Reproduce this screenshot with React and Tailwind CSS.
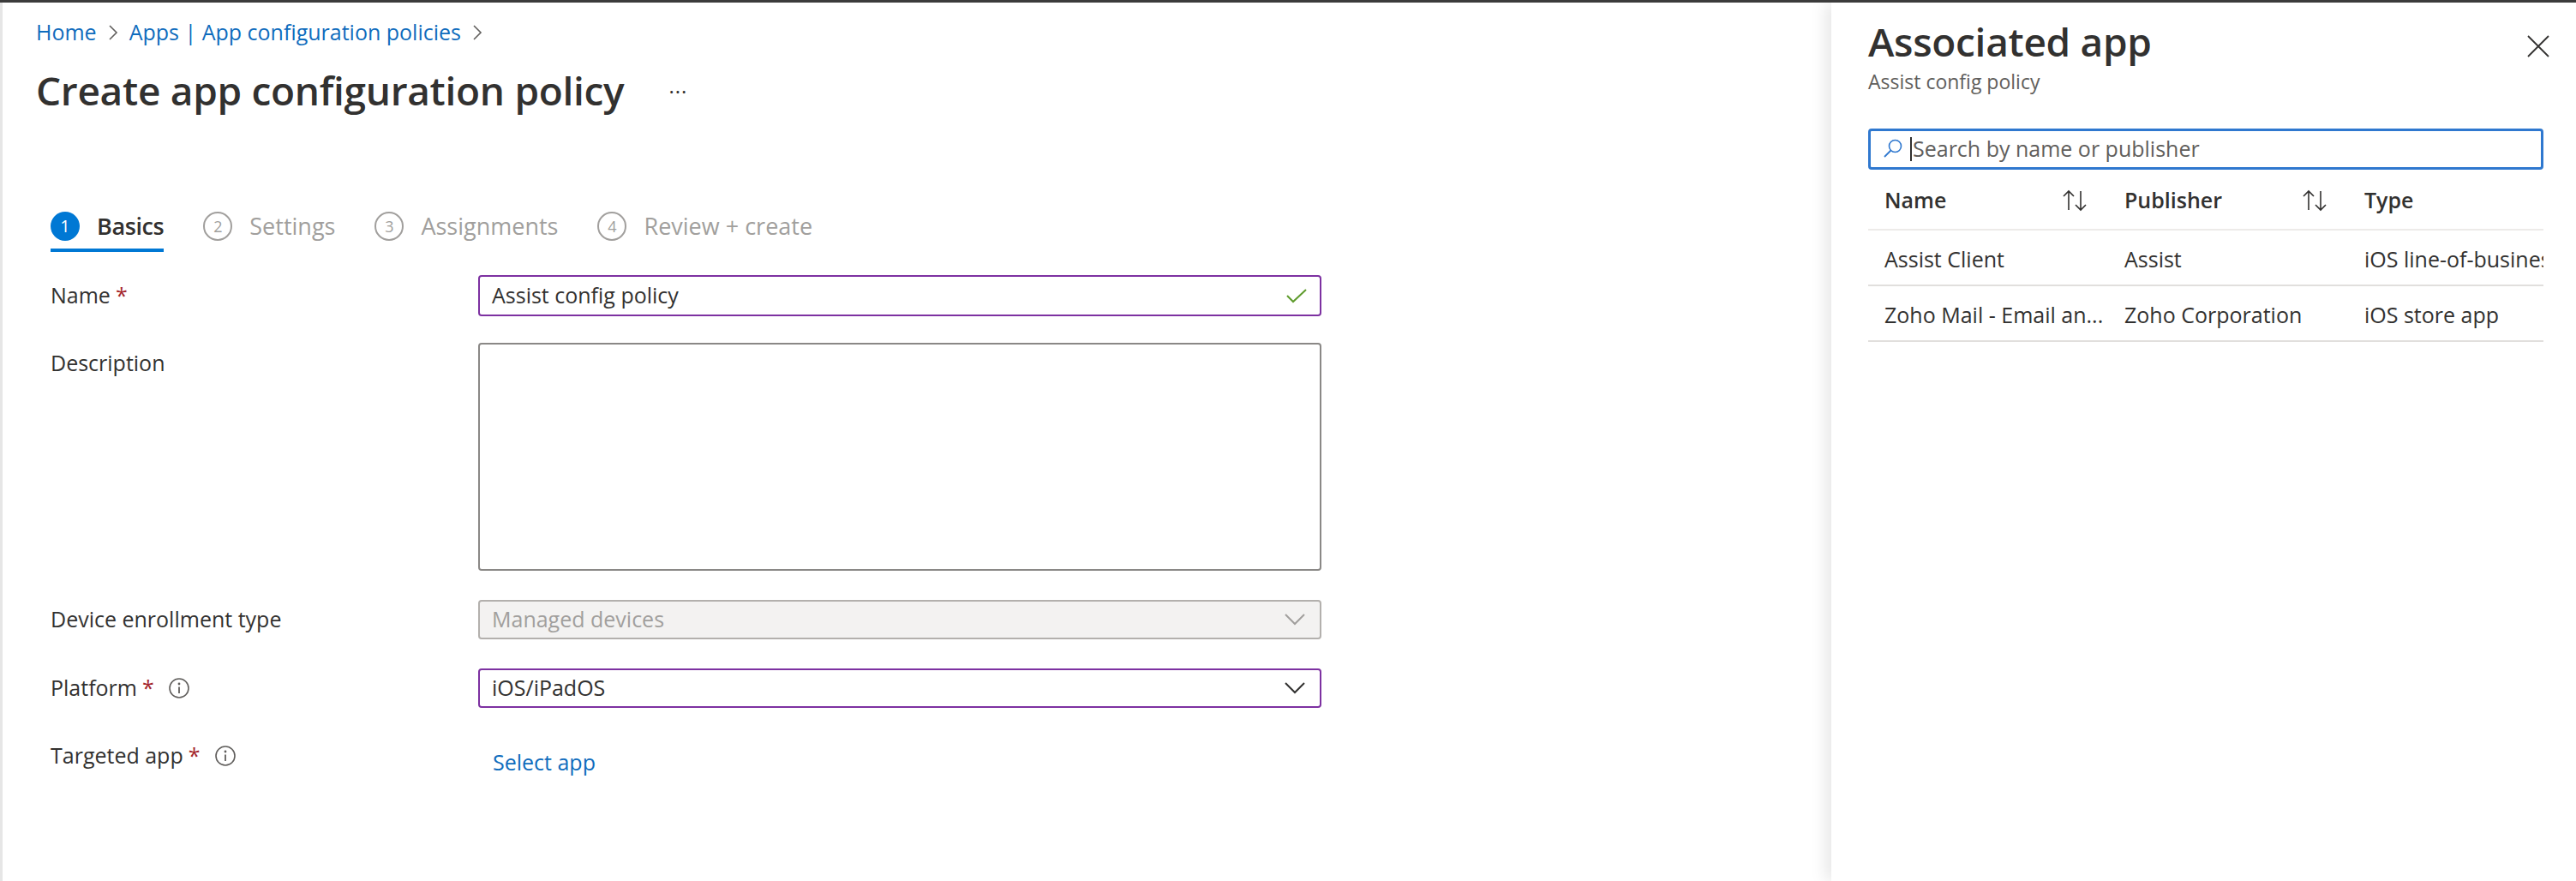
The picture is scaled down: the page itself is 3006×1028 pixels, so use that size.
import React from "react"

const Chevron = () => (
  <svg width="14" height="22" viewBox="0 0 14 22" className="shrink-0">
    <path d="M3 3 L11 11 L3 19" fill="none" stroke="#605e5c" strokeWidth="1.6" />
  </svg>
)

const ChevronDown = ({ color }) => (
  <svg width="26" height="16" viewBox="0 0 26 16">
    <path d="M2 2 L13 13 L24 2" fill="none" stroke={color} strokeWidth="2" />
  </svg>
)

const Info = () => (
  <svg width="26" height="26" viewBox="0 0 26 26" className="shrink-0">
    <circle cx="13" cy="13" r="11" fill="none" stroke="#605e5c" strokeWidth="1.6" />
    <circle cx="13" cy="8" r="1.4" fill="#605e5c" />
    <path d="M13 11.5 V19" stroke="#605e5c" strokeWidth="1.8" />
  </svg>
)

const SortIcon = () => (
  <svg width="36" height="30" viewBox="0 0 36 30">
    <path d="M10 26 V4 M4 10 L10 4 L16 10" fill="none" stroke="#323130" strokeWidth="1.6" />
    <path d="M24 4 V26 M18 20 L24 26 L30 20" fill="none" stroke="#323130" strokeWidth="1.6" />
  </svg>
)

const Step = ({ num, label, active }) => (
  <div className={`flex items-center gap-5 h-[56px] border-b-4 ${active ? "border-[#0078d4]" : "border-transparent"}`}>
    {active ? (
      <div className="w-[34px] h-[34px] rounded-full bg-[#0078d4] text-white flex items-center justify-center text-[20px]">{num}</div>
    ) : (
      <div className="w-[34px] h-[34px] rounded-full border-2 border-[#a19f9d] text-[#a19f9d] flex items-center justify-center text-[18px]">{num}</div>
    )}
    <span className={`text-[27px] ${active ? "text-[#323130] font-semibold tracking-[-0.4px]" : "text-[#a19f9d]"}`}>{label}</span>
  </div>
)

const Label = ({ text, required, info }) => (
  <div className="flex items-center gap-2 text-[25px] text-[#323130]">
    <span>{text}</span>
    {required && <span className="text-[#a4262c] -ml-[2px]">*</span>}
    {info && <span className="ml-[8px] flex"><Info /></span>}
  </div>
)

const rows = [
  { name: "Assist Client", publisher: "Assist", type: "iOS line-of-business app" },
  { name: "Zoho Mail - Email an...", publisher: "Zoho Corporation", type: "iOS store app" },
]

export default function App() {
  return (
    <div className="w-[3006px] h-[1028px] flex bg-white border-t-[3px] border-[#3b3b3b] font-['Open_Sans',sans-serif] overflow-hidden">
      {/* main blade */}
      <div className="flex-1 border-l-[3px] border-[#e6e6e6] pl-[39px]">
        <div className="mt-[16px] h-[38px] flex items-center gap-[12px] text-[25px] text-[#0f6cbd]">
          <span>Home</span>
          <Chevron />
          <span>Apps | App configuration policies</span>
          <Chevron />
        </div>
        <div className="mt-[16px] h-[64px] flex items-center">
          <h1 className="text-[46px] font-semibold text-[#323130] tracking-[-0.3px]">Create app configuration policy</h1>
          <span className="ml-[52px] text-[24px] text-[#323130] tracking-[1px] -mt-[10px]">...</span>
        </div>

        <div className="pl-[17px]">
          <div className="mt-[101px] flex gap-[46px]">
            <Step num="1" label="Basics" active />
            <Step num="2" label="Settings" />
            <Step num="3" label="Assignments" />
            <Step num="4" label="Review + create" />
          </div>

          <div className="mt-[27px] w-[1483px]">
            <div className="grid grid-cols-[499px_1fr] items-center">
              <Label text="Name" required />
              <div className="h-[48px] border-2 border-[#7d31a1] rounded-[4px] flex items-center justify-between pl-[14px] pr-[14px] text-[25px] text-[#323130]">
                <span>Assist config policy</span>
                <svg width="26" height="20" viewBox="0 0 26 20">
                  <path d="M2 10 L9 17 L24 3" fill="none" stroke="#5e9b2c" strokeWidth="2" />
                </svg>
              </div>
            </div>

            <div className="mt-[31px] grid grid-cols-[499px_1fr] items-start">
              <div className="pt-[5px]"><Label text="Description" /></div>
              <div className="h-[266px] border-2 border-[#8a8886] rounded-[4px]" />
            </div>

            <div className="mt-[34px] grid grid-cols-[499px_1fr] items-center">
              <Label text="Device enrollment type" />
              <div className="h-[46px] border-2 border-[#b3b0ad] bg-[#f3f2f1] rounded-[4px] flex items-center justify-between pl-[14px] pr-[16px] text-[25px] text-[#a19f9d]">
                <span>Managed devices</span>
                <ChevronDown color="#a19f9d" />
              </div>
            </div>

            <div className="mt-[34px] grid grid-cols-[499px_1fr] items-center">
              <Label text="Platform" required info />
              <div className="h-[46px] border-2 border-[#7d31a1] rounded-[4px] flex items-center justify-between pl-[14px] pr-[16px] text-[25px] text-[#323130]">
                <span>iOS/iPadOS</span>
                <ChevronDown color="#323130" />
              </div>
            </div>

            <div className="mt-[37px] grid grid-cols-[499px_1fr] items-start">
              <Label text="Targeted app" required info />
              <span className="pl-[17px] pt-[8px] text-[25px] text-[#0f6cbd]">Select app</span>
            </div>
          </div>
        </div>
      </div>

      {/* context pane */}
      <div className="w-[869px] h-full bg-white shadow-[-6px_0_18px_rgba(0,0,0,0.10)] pl-[43px] pr-[38px]">
        <div className="flex items-start justify-between">
          <div>
            <h2 className="mt-[12px] h-[66px] flex items-center text-[46px] font-semibold text-[#323130] tracking-[-0.3px]">Associated app</h2>
            <p className="mt-[-3px] text-[23px] text-[#605e5c]">Assist config policy</p>
          </div>
          <svg width="28" height="28" viewBox="0 0 28 28" className="mt-[37px] mr-[-8px]">
            <path d="M2 2 L26 26 M26 2 L2 26" fill="none" stroke="#323130" strokeWidth="1.8" />
          </svg>
        </div>

        <div className="mt-[37px] h-[48px] border-[3px] border-[#2f78cf] rounded-[4px] flex items-center pl-[14px]">
          <svg width="24" height="26" viewBox="0 0 24 26" className="shrink-0">
            <circle cx="14.5" cy="9.5" r="7" fill="none" stroke="#2f78cf" strokeWidth="1.6" />
            <path d="M9.5 14.5 L2 22" stroke="#2f78cf" strokeWidth="1.8" />
          </svg>
          <span className="ml-[8px] w-[2px] h-[28px] bg-[#323130]" />
          <span className="ml-[1px] text-[25px] text-[#605e5c]">Search by name or publisher</span>
        </div>

        <div className="mt-[3px] overflow-hidden">
          <div className="grid grid-cols-[280px_280px_1fr] h-[68px] items-center border-b-2 border-[#edebe9] text-[25px] font-semibold text-[#323130]">
            <div className="pl-[19px] pr-[20px] flex items-center justify-between">
              <span>Name</span>
              <SortIcon />
            </div>
            <div className="pl-[19px] pr-[20px] flex items-center justify-between">
              <span>Publisher</span>
              <SortIcon />
            </div>
            <div className="pl-[19px]">Type</div>
          </div>
          {rows.map((r) => (
            <div key={r.name} className="grid grid-cols-[280px_280px_1fr] h-[65px] items-center border-b-2 border-[#e1dfdd] text-[25px] text-[#323130]">
              <div className="pl-[19px] pt-[6px] whitespace-nowrap overflow-hidden">{r.name}</div>
              <div className="pl-[19px] pt-[6px] whitespace-nowrap overflow-hidden">{r.publisher}</div>
              <div className="pl-[19px] pt-[6px] whitespace-nowrap overflow-hidden">{r.type}</div>
            </div>
          ))}
        </div>
      </div>
    </div>
  )
}
